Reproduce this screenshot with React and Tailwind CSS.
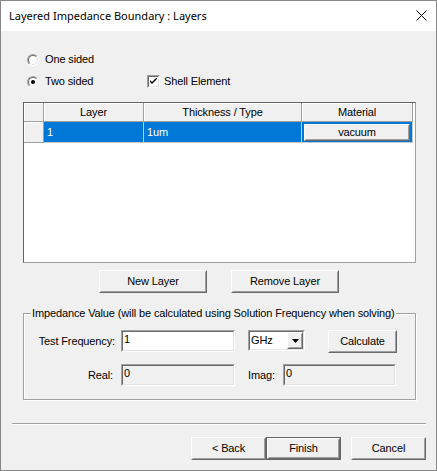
import React from "react";

const sunken = "border border-t-[#a0a0a0] border-l-[#a0a0a0] border-r-white border-b-white";
const sunkenInner = "border border-t-[#696969] border-l-[#696969] border-r-[#e3e3e3] border-b-[#e3e3e3]";
const raisedOuter = "border border-t-white border-l-white border-r-[#696969] border-b-[#696969]";
const raisedInner = "border border-t-[#f0f0f0] border-l-[#f0f0f0] border-r-[#a0a0a0] border-b-[#a0a0a0]";

function Button({ w, children, isDefault }) {
  if (isDefault) {
    return (
      <div className="h-[23px] border border-[#646464] flex" style={{ width: w }}>
        <div className={`flex-1 ${raisedOuter} flex`}>
          <div className={`flex-1 ${raisedInner} flex items-center justify-center bg-[#f0f0f0]`}>{children}</div>
        </div>
      </div>
    );
  }
  return (
    <div className={`h-[23px] ${raisedOuter} flex`} style={{ width: w }}>
      <div className={`flex-1 ${raisedInner} flex items-center justify-center bg-[#f0f0f0]`}>{children}</div>
    </div>
  );
}

function TextBox({ w, h = 22, value, disabled }) {
  return (
    <div className={`${sunken} flex`} style={{ width: w, height: h }}>
      <div className={`flex-1 ${sunkenInner} ${disabled ? "bg-[#f0f0f0]" : "bg-white"} pl-[1px] leading-[14px]`}>
        {value}
      </div>
    </div>
  );
}

function Radio({ checked }) {
  return (
    <div className="w-[12px] h-[12px] rounded-full border border-t-[#a0a0a0] border-l-[#a0a0a0] border-r-white border-b-white flex">
      <div className="flex-1 rounded-full border border-t-[#696969] border-l-[#696969] border-r-[#e3e3e3] border-b-[#e3e3e3] bg-white flex items-center justify-center">
        {checked && <div className="w-[4px] h-[4px] rounded-full bg-black" />}
      </div>
    </div>
  );
}

const hdr = "h-full border-r border-b border-[#a0a0a0] bg-[#f0f0f0] shadow-[inset_1px_1px_0_#fff] flex items-center justify-center";
const cell = "h-full border-r border-b border-[#c8c8c8] bg-[#0078d7] text-white flex items-center pl-[3px]";

export default function App() {
  return (
    <div
      className="w-[437px] h-[471px] border border-[#888888] bg-[#f0f0f0] text-black text-[11px] tracking-[-0.13px] flex flex-col"
      style={{ fontFamily: '"Liberation Sans", Arial, sans-serif' }}
    >
      {/* Title bar */}
      <div className="h-[30px] bg-white flex items-center pl-[8px] pr-[9px] shrink-0">
        <div className="text-[11px] tracking-normal flex-1 text-[#000]" style={{ fontFamily: '"Noto Sans", sans-serif' }}>
          Layered Impedance Boundary : Layers
        </div>
        <svg width="11" height="11" viewBox="0 0 11 11" className="mb-[1px]">
          <path d="M0.5 0.5 L10.5 10.5 M10.5 0.5 L0.5 10.5" stroke="#000" strokeWidth="1" />
        </svg>
      </div>

      {/* Radios */}
      <div className="ml-[26px] mt-[22px] h-[13px] flex items-center">
        <Radio />
        <span className="ml-[6px]">One sided</span>
      </div>
      <div className="ml-[26px] mt-[9px] h-[13px] flex items-center">
        <div className="w-[120px] flex items-center">
          <Radio checked />
          <span className="ml-[6px]">Two sided</span>
        </div>
        <div className={`w-[13px] h-[13px] ${sunken} flex`}>
          <div className={`flex-1 ${sunkenInner} bg-white flex items-center justify-center`}>
            <svg width="7" height="7" viewBox="0 0 7 7">
              <path d="M0 2 L0 4 L2 6 L7 1 L7 -1 L2 4 Z" fill="#000" />
            </svg>
          </div>
        </div>
        <span className="ml-[4px]">Shell Element</span>
      </div>

      {/* Table */}
      <div className="ml-[22px] mt-[14px] w-[393px] h-[161px] border border-t-[#646464] border-l-[#646464] border-r-[#a0a0a0] border-b-[#a0a0a0] bg-white shrink-0">
        <div className="flex h-[19px]">
          <div className={`${hdr} w-[20px]`} />
          <div className={`${hdr} w-[100px]`}>Layer</div>
          <div className={`${hdr} w-[158px]`}>Thickness / Type</div>
          <div className={`${hdr} w-[111px]`}>Material</div>
        </div>
        <div className="flex h-[21px]">
          <div className={`${hdr} w-[20px]`} />
          <div className={`${cell} w-[100px]`}>1</div>
          <div className={`${cell} w-[158px]`}>1um</div>
          <div className="h-full w-[111px] border-r border-b border-[#c8c8c8] bg-[#0078d7] flex items-center justify-center">
            <div className={`w-[106px] h-[17px] ${raisedOuter} flex`}>
              <div className={`flex-1 ${raisedInner} flex items-center justify-center bg-[#f0f0f0]`}>vacuum</div>
            </div>
          </div>
        </div>
      </div>

      {/* Layer buttons */}
      <div className="ml-[98px] mt-[7px] flex gap-[24px]">
        <Button w={108}>New Layer</Button>
        <Button w={108}>Remove Layer</Button>
      </div>

      {/* Group box */}
      <div className="relative ml-[22px] mt-[20px] w-[393px] h-[87px] border border-[#a0a0a0] shadow-[inset_1px_1px_0_#fff,1px_1px_0_#fff] shrink-0">
        <span className="absolute left-[7px] -top-[8px] px-[1px] bg-[#f0f0f0] leading-[14px]">
          Impedance Value (will be calculated using Solution Frequency when solving)
        </span>
        <div className="mt-[16px] flex items-start">
          <div className="w-[91px] h-[22px] flex items-center justify-end">Test Frequency:</div>
          <div className="ml-[6px]">
            <TextBox w={114} value="1" />
          </div>
          <div className="ml-[13px]">
            <div className={`w-[57px] h-[21px] ${sunken} flex`}>
              <div className={`flex-1 ${sunkenInner} bg-white flex`}>
                <div className="flex-1 pl-[1px] leading-[16px]">GHz</div>
                <div className={`w-[16px] ${raisedOuter} flex`}>
                  <div className={`flex-1 ${raisedInner} bg-[#f0f0f0] flex items-center justify-center`}>
                    <svg width="7" height="4" viewBox="0 0 7 4">
                      <path d="M0 0 L7 0 L3.5 4 Z" fill="#000" />
                    </svg>
                  </div>
                </div>
              </div>
            </div>
          </div>
          <div className="ml-[23px]">
            <Button w={69}>Calculate</Button>
          </div>
        </div>
        <div className="mt-[11px] flex items-start">
          <div className="w-[89px] h-[22px] flex items-center justify-end">Real:</div>
          <div className="ml-[8px]">
            <TextBox w={114} value="0" disabled />
          </div>
          <div className="ml-[13px] w-[35px] h-[22px] flex items-center">Imag:</div>
          <TextBox w={113} value="0" disabled />
        </div>
      </div>

      {/* Separator */}
      <div className="ml-[11px] mt-[23px] w-[414px] h-[2px] border-t border-t-[#a0a0a0] border-b border-b-white shrink-0" />

      {/* Bottom buttons */}
      <div className="ml-[190px] mt-[12px] flex">
        <Button w={75}>&lt; Back</Button>
        <Button w={75} isDefault>Finish</Button>
        <div className="ml-[10px]">
          <Button w={75}>Cancel</Button>
        </div>
      </div>
    </div>
  );
}
